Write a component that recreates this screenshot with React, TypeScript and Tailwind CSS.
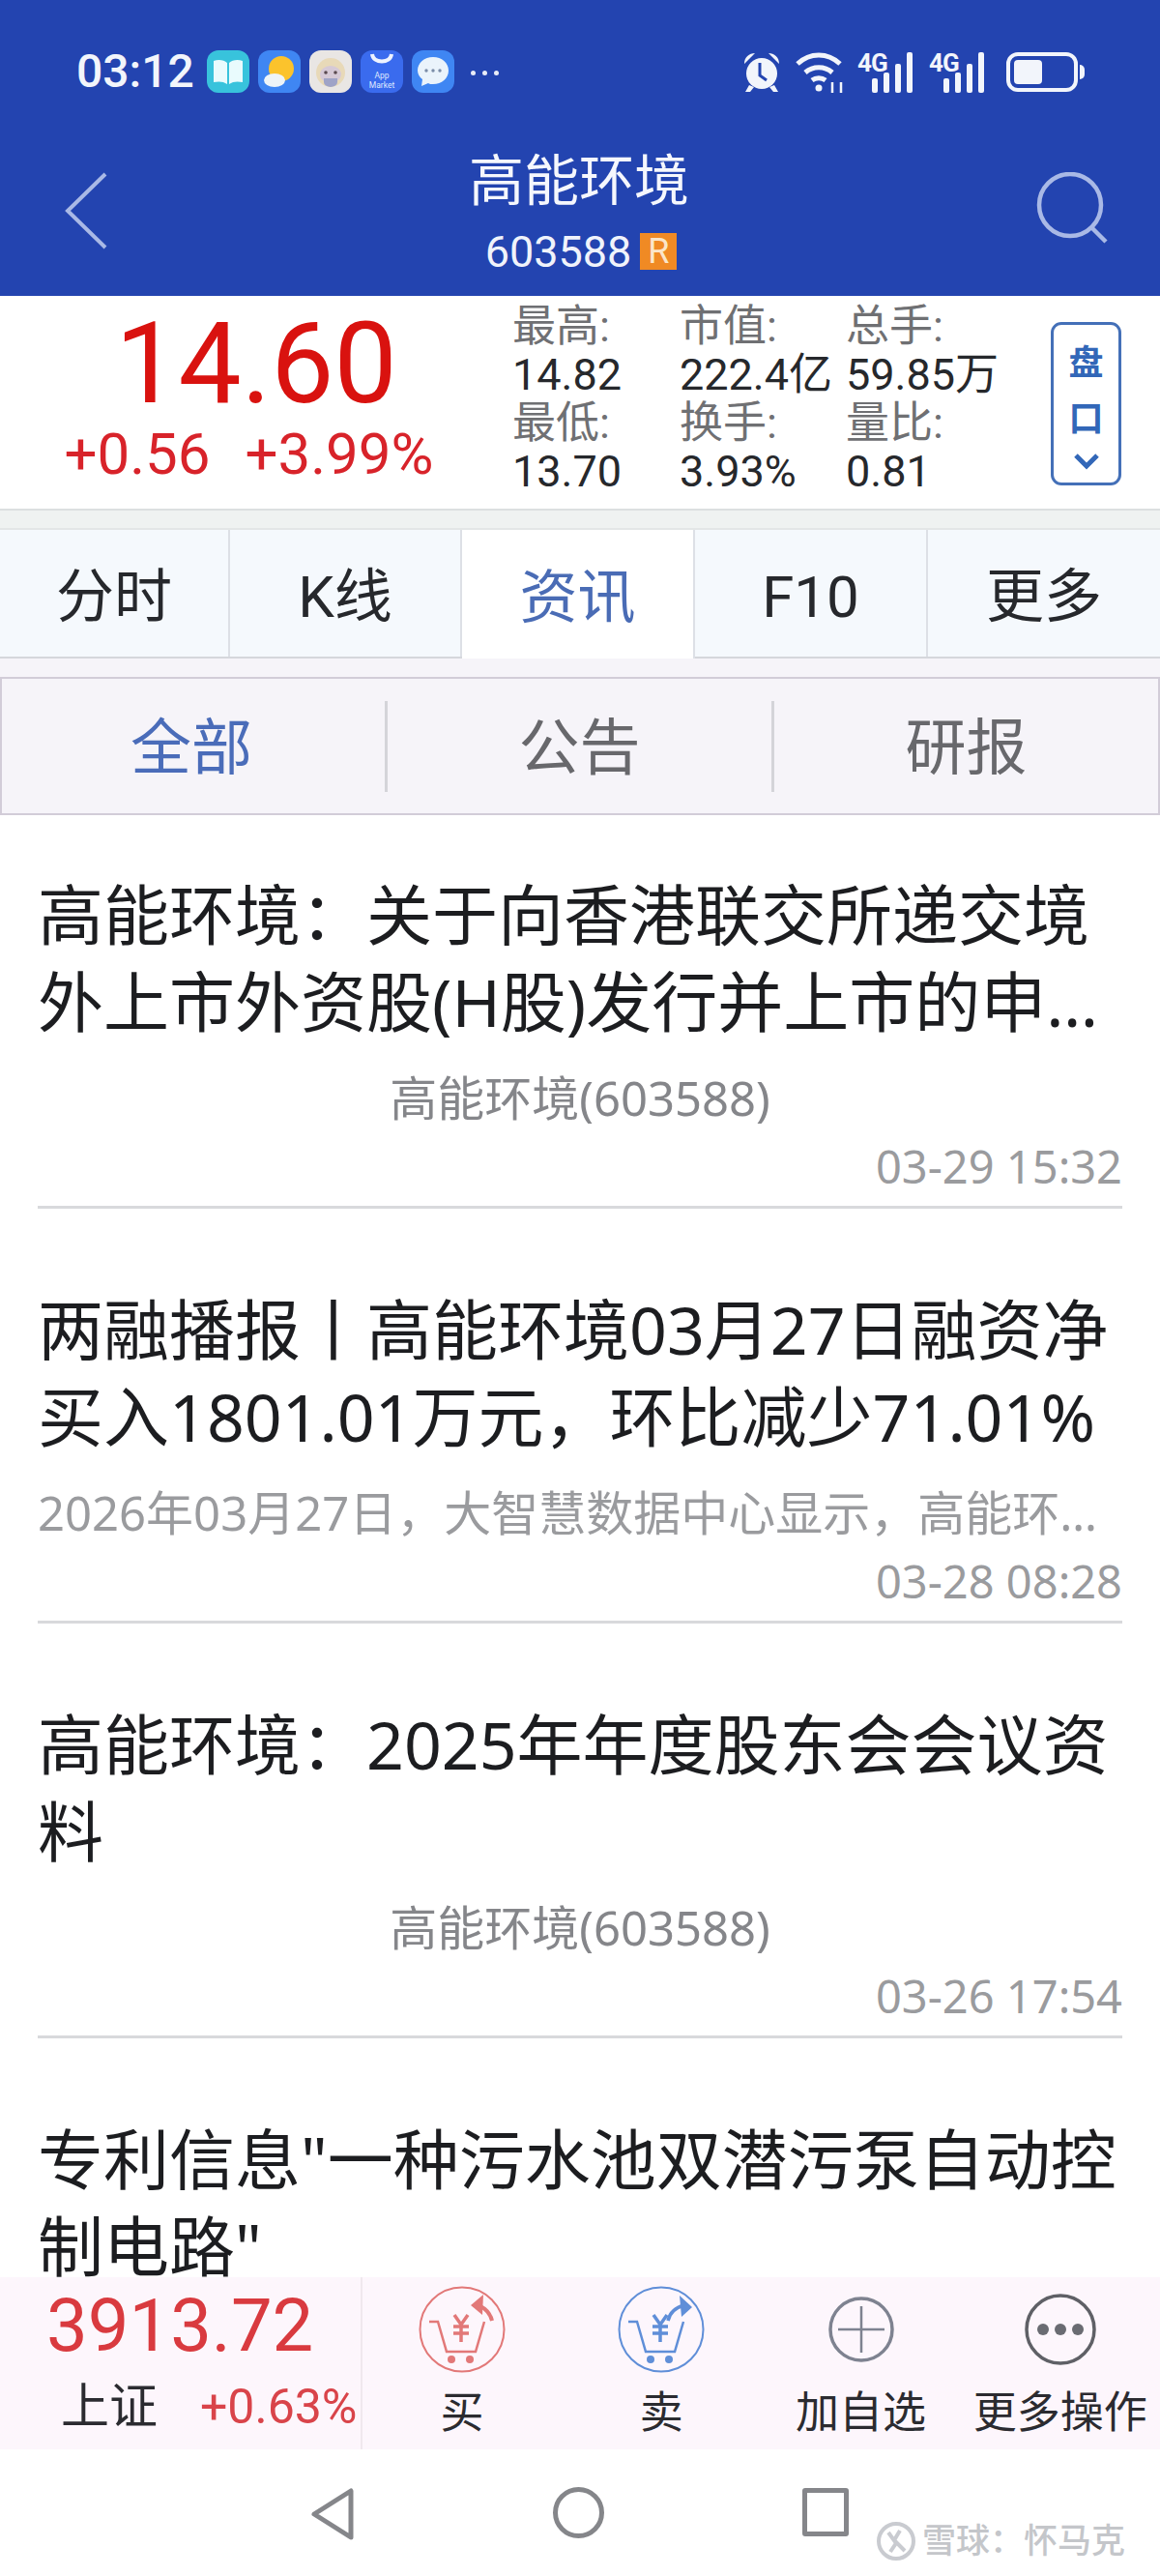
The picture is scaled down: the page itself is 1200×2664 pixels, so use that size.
import type { ReactNode } from "react";

const FONT = `"Roboto","Noto Sans CJK SC",sans-serif`;
const LIST_FONT = "font-['Noto_Sans','Noto_Sans_CJK_SC',sans-serif]";

const articles = [
  {
    lines: ["高能环境：关于向香港联交所递交境", "外上市外资股(H股)发行并上市的申…"],
    source: "高能环境(603588)",
    centered: true,
    time: "03-29 15:32",
  },
  {
    lines: ["两融播报丨高能环境03月27日融资净", "买入1801.01万元，环比减少71.01%"],
    source: "2026年03月27日，大智慧数据中心显示，高能环…",
    centered: false,
    time: "03-28 08:28",
  },
  {
    lines: ["高能环境：2025年年度股东会会议资", "料"],
    source: "高能环境(603588)",
    centered: true,
    time: "03-26 17:54",
  },
  {
    lines: ['专利信息"一种污水池双潜污泵自动控', '制电路"'],
    source: "",
    centered: true,
    time: "",
  },
];

const stats = [
  ["最高:", "市值:", "总手:"],
  ["14.82", "222.4亿", "59.85万"],
  ["最低:", "换手:", "量比:"],
  ["13.70", "3.93%", "0.81"],
];

const tabs = [
  { label: "分时", width: "w-[238px]" },
  { label: "K线", width: "w-[240px]" },
  { label: "资讯", width: "w-[241px]" },
  { label: "F10", width: "w-[241px]" },
  { label: "更多", width: "flex-1" },
];

const subTabs = [
  { label: "全部", width: "w-[399px]" },
  { label: "公告", width: "w-[400px]" },
  { label: "研报", width: "flex-1" },
];

const AppIcon = ({ className, children }: { className: string; children: ReactNode }) => (
  <div className={`h-[44px] w-[44px] rounded-[12px] overflow-hidden ${className}`}>
    <svg viewBox="0 0 44 44" className="h-full w-full">
      {children}
    </svg>
  </div>
);

const Signal = ({ className }: { className: string }) => (
  <div className={`relative h-[44px] w-[63px] ${className}`}>
    <span className="absolute left-0 top-[0px] text-[26px] font-bold leading-none text-[#f2f5fb] tracking-[-1px]">4G</span>
    <svg viewBox="0 0 63 44" className="h-full w-full" fill="#f2f5fb">
      <rect x="15" y="29" width="6" height="15" rx="2" />
      <rect x="27" y="23" width="6" height="21" rx="2" />
      <rect x="39" y="14" width="6" height="30" rx="2" />
      <rect x="51" y="2" width="6" height="42" rx="2" />
    </svg>
  </div>
);

const StatusBar = () => (
  <div className="flex h-[96px] items-end pl-[79px] pr-[78px]">
    <div className="flex h-[44px] items-center w-full">
      <span className="text-[48px] font-medium leading-none text-[#f2f5fb] w-[135px]">03:12</span>
      <div className="flex gap-[9px]">
        <AppIcon className="bg-[#38c3dc]">
          <path d="M7 11c5-2 11-1 14 2v22c-4-3-9-3-14-2z" fill="#e9fbfd" />
          <path d="M37 11c-5-2-11-1-14 2v22c4-3 9-3 14-2z" fill="#e9fbfd" />
        </AppIcon>
        <AppIcon className="bg-[#3f86f3]">
          <circle cx="24" cy="19" r="13" fill="#fbc32c" />
          <ellipse cx="17" cy="31" rx="11" ry="7" fill="#eef4f8" />
        </AppIcon>
        <AppIcon className="bg-[#e9e6e4]">
          <circle cx="22" cy="23" r="15" fill="#e8d9b8" />
          <ellipse cx="22" cy="25" rx="11" ry="9" fill="#d6c9d6" />
          <circle cx="17" cy="23" r="1.8" fill="#5b4a50" />
          <circle cx="27" cy="23" r="1.8" fill="#5b4a50" />
          <path d="M15 29h14v4a7 5 0 0 1-14 0z" fill="#9fa3c7" />
        </AppIcon>
        <AppIcon className="bg-[#3a6bee]">
          <path d="M12 4c1 10 19 10 20 0" fill="none" stroke="#eef3ff" strokeWidth="4" />
          <text x="22" y="29" textAnchor="middle" fontSize="8.5" fill="#dfe8ff" fontFamily="Roboto">App</text>
          <text x="22" y="39" textAnchor="middle" fontSize="8.5" fill="#dfe8ff" fontFamily="Roboto">Market</text>
        </AppIcon>
        <AppIcon className="bg-[#3f86f3]">
          <path d="M22 7c9 0 16 6 16 14s-7 14-16 14c-2 0-4 0-5-1l-7 3 1-7c-3-2-5-6-5-9 0-8 7-14 16-14z" fill="#eaf3fb" />
          <circle cx="15" cy="21" r="1.7" fill="#7b8da8" />
          <circle cx="22" cy="21" r="1.7" fill="#7b8da8" />
          <circle cx="29" cy="21" r="1.7" fill="#7b8da8" />
        </AppIcon>
      </div>
      <div className="ml-[17px] flex gap-[7px] pt-[2px]">
        <span className="h-[5px] w-[5px] rounded-full bg-[#e8ecf7]" />
        <span className="h-[5px] w-[5px] rounded-full bg-[#e8ecf7]" />
        <span className="h-[5px] w-[5px] rounded-full bg-[#e8ecf7]" />
      </div>
      <div className="ml-auto flex items-center">
        <svg viewBox="0 0 42 44" className="h-[44px] w-[42px]" fill="#f2f5fb">
          <circle cx="21" cy="24" r="16" />
          <path d="M3 14c0-7 5-11 11-11zM39 14c0-7-5-11-11-11z" />
          <path d="M8 36l-4 7h5l4-5zM34 36l4 7h-5l-4-5z" />
          <path d="M19 13v13l7 5" stroke="#2344b0" strokeWidth="3" fill="none" />
        </svg>
        <svg viewBox="0 0 52 44" className="ml-[14px] h-[44px] w-[52px]" fill="none" stroke="#f2f5fb" strokeWidth="5">
          <path d="M2 14c13-12 31-12 44 0" />
          <path d="M10 23c8-7 20-7 28 0" />
          <path d="M17 31c4-3 10-3 14 0" />
          <circle cx="24" cy="39" r="3.5" fill="#f2f5fb" stroke="none" />
          <path d="M38 44V33M47 44V33" strokeWidth="2.5" />
        </svg>
        <Signal className="ml-[12px]" />
        <Signal className="ml-[11px]" />
        <div className="ml-[17px] flex items-center">
          <div className="h-[41px] w-[74px] rounded-[12px] border-[4px] border-[#f2f5fb] p-[4px]">
            <div className="h-full w-[29px] rounded-[4px] bg-[#f2f5fb]" />
          </div>
          <div className="ml-[2px] h-[15px] w-[5px] rounded-r-full bg-[#f2f5fb]" />
        </div>
      </div>
    </div>
  </div>
);

const Header = () => (
  <header className="h-[306px] bg-[#2344b0] shrink-0">
    <StatusBar />
    <div className="relative flex flex-col items-center text-white">
      <div className="mt-[57px] h-[70px] pr-[2px] text-[57px] leading-[70px] text-[#f5f7fd]">高能环境</div>
      <div className="mt-[15px] flex h-[44px] items-center pl-[2px]">
        <span className="text-[45px] leading-none text-[#f0f3fb]">603588</span>
        <span className="ml-[9px] flex h-[38px] w-[38px] items-center justify-center bg-[#f08a24] text-[36px] leading-none text-[#fbe6c8]">R</span>
      </div>
      <svg viewBox="0 0 44 80" className="absolute left-[67px] top-[82px] h-[80px] w-[44px]" fill="none" stroke="#a9b9e6" strokeWidth="4">
        <path d="M42 2L3 40l39 38" />
      </svg>
      <svg viewBox="0 0 78 78" className="absolute left-[1071px] top-[82px] h-[78px] w-[78px]" fill="none" stroke="#a9b9e6" strokeWidth="4.5">
        <circle cx="36" cy="34" r="32" />
        <path d="M58 57l15 15" />
      </svg>
    </div>
  </header>
);

const Quote = () => (
  <section className="flex h-[222px] shrink-0 border-b-2 border-[#dcdfe0] bg-white">
    <div className="w-[530px] flex flex-col items-center pt-[12px]">
      <div className="h-[116px] text-[116px] leading-[116px] text-[#d9120f]">14.60</div>
      <div className="mt-[6px] flex h-[60px] gap-[36px] pr-[15px] text-[60px] leading-[60px] text-[#d8232a]">
        <span>+0.56</span>
        <span>+3.99%</span>
      </div>
    </div>
    <div className="pt-[6px] w-[558px]">
      {stats.map((row, i) => (
        <div key={i} className={`flex h-[50px] items-center text-[45px] leading-none ${i % 2 ? "text-[#26282c]" : "text-[#6f7073]"}`}>
          <span className="w-[173px]">{row[0]}</span>
          <span className="w-[172px] whitespace-nowrap">{row[1]}</span>
          <span className="whitespace-nowrap">{row[2]}</span>
        </div>
      ))}
    </div>
    <div className="-ml-[1px] mt-[27px] flex h-[169px] w-[73px] flex-col items-center rounded-[11px] border-[3px] border-[#4470b8] text-[#3267b8]">
      <span className="mt-[18px] text-[36px] font-bold leading-[44px]">盘</span>
      <span className="mt-[14px] text-[36px] font-bold leading-[44px]">口</span>
      <svg viewBox="0 0 28 18" className="mt-[12px] h-[18px] w-[28px]" fill="none" stroke="#3267b8" strokeWidth="5">
        <path d="M3 3l11 11L25 3" />
      </svg>
    </div>
  </section>
);

const Tabs = () => (
  <>
    <div className="h-[20px] shrink-0 bg-[#eff2f1] border-b-2 border-[#e3e6e6]" />
    <nav className="flex h-[133px] shrink-0 border-b-2 border-[#d5d7dc] bg-[#f5f9fd]">
      {tabs.map((tab, i) => (
        <div
          key={tab.label}
          className={`flex ${tab.width} items-center justify-center pt-[8px] text-[60px] leading-none ${i < 4 ? "border-r-2 border-[#dde0e6]" : ""} ${
            i === 2 ? "bg-white text-[#4a6cb5] -mb-[2px]" : "text-[#26282c]"
          }`}
        >
          {tab.label}
        </div>
      ))}
    </nav>
    <div className="shrink-0 bg-[#f6f4f9] pt-[19px]">
      <div className="flex h-[143px] items-center border-y-2 border-x-2 border-[#d2ccd8]">
        {subTabs.map((tab, i) => (
          <div
            key={tab.label}
            className={`flex h-[94px] ${tab.width} items-center justify-center pt-[4px] text-[63px] leading-none ${i < 2 ? "border-r-3 border-[#d4d4d9]" : ""} ${
              i === 0 ? "text-[#4a6cb9] pr-[4px]" : "text-[#68686c]"
            }`}
          >
            {tab.label}
          </div>
        ))}
      </div>
    </div>
  </>
);

const ArticleList = () => (
  <main className={`min-h-0 flex-1 overflow-hidden bg-white px-[39px] pt-[58px] ${LIST_FONT}`}>
    {articles.map((item) => (
      <article key={item.lines[0]} className="mb-[80px]">
        <h2 className="text-[68px] font-normal leading-[90px] text-[#1c1d20] whitespace-nowrap">
          {item.lines.map((line) => (
            <div key={line}>{line}</div>
          ))}
        </h2>
        <p
          className={`mt-[27px] h-[54px] whitespace-nowrap text-[49px] leading-[54px] ${
            item.centered ? "text-center text-[#85868a]" : "text-[#9a9b9e]"
          }`}
        >
          {item.source}
        </p>
        <p className="mt-[17px] h-[54px] text-right text-[47px] leading-[54px] text-[#9a9b9e]">{item.time}</p>
        <div className="mt-[14px] h-[3px] bg-[#d8d9dc]" />
      </article>
    ))}
  </main>
);

const Cart = ({ color, sell }: { color: string; sell?: boolean }) => (
  <svg viewBox="0 0 90 90" className="h-[90px] w-[90px]" fill="none" stroke={color} strokeWidth="2">
    <circle cx="45" cy="45" r="43.5" />
    <path d="M11 37h9l9 31h30l9-31" strokeWidth="2.5" />
    <path d="M37 30l7 10 7-10M44 40v18M36 42h16M36 49h16" strokeWidth="3.5" />
    <circle cx="34" cy="76" r="4" fill={color} stroke="none" />
    <circle cx="53" cy="76" r="4" fill={color} stroke="none" />
    {sell ? (
      <>
        <path d="M52 36c2-9 9-14 17-16" strokeWidth="3.5" />
        <path d="M64 10l13 12-11 10z" fill={color} stroke="none" />
      </>
    ) : (
      <>
        <path d="M76 36c-2-8-6-12-12-15" strokeWidth="4" />
        <path d="M67 9l-13 11 12 10z" fill={color} stroke="none" />
      </>
    )}
  </svg>
);

const Action = ({ label, children }: { label: string; children: ReactNode }) => (
  <div className="flex flex-col items-center">
    <div className="flex h-[108px] items-center justify-center">{children}</div>
    <span className="mt-[6px] whitespace-nowrap text-[45px] leading-[54px] text-[#2b2b30]">{label}</span>
  </div>
);

const BottomBar = () => (
  <footer className="flex h-[178px] shrink-0 bg-[#fdf6fc]">
    <div className="w-[375px] border-r-2 border-[#f0e8ee] pt-[7px]">
      <div className="ml-[48px] h-[86px] text-[76px] leading-[86px] text-[#d93a3f]">3913.72</div>
      <div className="ml-[63px] mt-[13px] flex items-center leading-[56px]">
        <span className="w-[144px] text-[50px] text-[#2b2b30]">上证</span>
        <span className="text-[50px] whitespace-nowrap text-[#d9444a]">+0.63%</span>
      </div>
    </div>
    <div className="grid flex-1 grid-cols-4 -ml-[2px] pl-[2px]">
      <Action label="买"><Cart color="#e27878" /></Action>
      <Action label="卖"><Cart color="#5f8ed8" sell /></Action>
      <Action label="加自选">
        <svg viewBox="0 0 70 70" className="h-[70px] w-[70px]" fill="none" stroke="#7e8290" strokeWidth="3.5">
          <circle cx="35" cy="35" r="32" />
          <path d="M11 35h48M35 11v48" strokeWidth="2.5" />
        </svg>
      </Action>
      <Action label="更多操作">
        <svg viewBox="0 0 76 76" className="h-[76px] w-[76px]" fill="#6a6b72" stroke="none">
          <circle cx="38" cy="38" r="35" fill="none" stroke="#5f6066" strokeWidth="3.5" />
          <circle cx="20" cy="38" r="6" />
          <circle cx="38" cy="38" r="6" />
          <circle cx="56" cy="38" r="6" />
        </svg>
      </Action>
    </div>
  </footer>
);

const NavBar = () => (
  <div className="relative flex h-[131px] shrink-0 items-start bg-white pl-[319px] pt-[39px]">
    <svg viewBox="0 0 50 56" className="h-[56px] w-[50px]" fill="none" stroke="#85868a" strokeWidth="5" strokeLinejoin="round">
      <path d="M44 4v48L6 28z" />
    </svg>
    <div className="ml-[203px] h-[53px] w-[53px] rounded-full border-[5px] border-[#85868a]" />
    <div className="ml-[205px] mt-[1px] h-[50px] w-[48px] rounded-[3px] border-[5px] border-[#85868a]" />
    <div className="absolute left-[906px] top-[72px] flex items-center text-[#c4c6ca]">
      <svg viewBox="0 0 42 46" className="h-[46px] w-[42px]" fill="none" stroke="#c9cbd0" strokeWidth="4">
        <circle cx="21" cy="23" r="18" />
        <path d="M13 14l8 11-6 9M25 12l-6 10 11 11" />
      </svg>
      <span className="ml-[6px] text-[35px] font-medium leading-none whitespace-nowrap">雪球：怀马克</span>
    </div>
  </div>
);

export default function App() {
  return (
    <div className="flex h-[2664px] w-[1200px] flex-col overflow-hidden bg-white" style={{ fontFamily: FONT }}>
      <Header />
      <Quote />
      <Tabs />
      <ArticleList />
      <BottomBar />
      <NavBar />
    </div>
  );
}
